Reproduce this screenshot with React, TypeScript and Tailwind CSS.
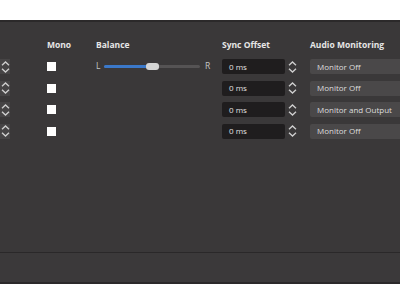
import React from 'react';

type Row = { monitor: string; slider?: boolean };

const rows: Row[] = [
  { monitor: 'Monitor Off', slider: true },
  { monitor: 'Monitor Off' },
  { monitor: 'Monitor and Output' },
  { monitor: 'Monitor Off' },
];

function Spinner({ className = '' }: { className?: string }) {
  return (
    <div className={`flex flex-col items-center justify-center w-[10px] h-[15px] ${className}`}>
      <svg width="9" height="5" viewBox="0 0 9 5">
        <path d="M1 4.3 L4.5 1 L8 4.3" fill="none" stroke="#cfcfcf" strokeWidth="1.3" />
      </svg>
      <svg width="9" height="5" viewBox="0 0 9 5" className="mt-[2px]">
        <path d="M1 0.7 L4.5 4 L8 0.7" fill="none" stroke="#cfcfcf" strokeWidth="1.3" />
      </svg>
    </div>
  );
}

export default function App() {
  return (
    <div
      className="w-[400px] h-[284px] bg-white flex flex-col overflow-hidden text-[#dcdcdc]"
      style={{ fontFamily: '"Open Sans", "Noto Sans", sans-serif' }}
    >
      <div className="h-[20px] bg-white shrink-0" />
      <div className="flex-1 flex flex-col bg-[#3a3839] border-t-2 border-[#2b292a]">
        <div className="h-[230px] pt-[12px]">
          {/* header */}
          <div className="grid grid-cols-[47px_49px_126px_88px_1fr] h-[22px] items-center text-[8.5px] font-bold text-[#e6e6e6]">
            <div />
            <div>Mono</div>
            <div>Balance</div>
            <div>Sync Offset</div>
            <div className="whitespace-nowrap">Audio Monitoring</div>
          </div>
          {rows.map((r, i) => (
            <div key={i} className="grid grid-cols-[47px_49px_126px_88px_1fr] h-[21.5px] items-center text-[8px]">
              <div>
                <Spinner className="bg-[#464445]" />
              </div>
              <div>
                <div className="w-[9px] h-[9px] bg-white" />
              </div>
              <div>
                {r.slider && (
                  <div className="flex items-center text-[#c4c4c4] text-[8.5px]">
                    <span className="w-[8px]">L</span>
                    <div className="relative w-[96px] h-[3px] bg-[#555354] rounded-full">
                      <div className="w-[46px] h-[3px] bg-[#3b78c9] rounded-full" />
                      <div className="absolute left-[42px] top-[-2px] w-[13px] h-[7px] rounded-[3px] bg-[#d4d4d4]" />
                    </div>
                    <span className="ml-[5px]">R</span>
                  </div>
                )}
              </div>
              <div className="flex items-center">
                <div className="w-[63px] h-[15px] bg-[#1f1d1e] rounded-[2px] flex items-center pl-[7px] text-[#e0e0e0]">0 ms</div>
                <Spinner className="ml-[2px]" />
              </div>
              <div className="h-[15px] bg-[#4a4849] rounded-l-[2px] flex items-center pl-[7px] text-[#dedede] whitespace-nowrap">
                {r.monitor}
              </div>
            </div>
          ))}
        </div>
        <div className="flex-1 border-t border-[#2a2829] bg-[#3b393a]" />
        <div className="h-[2px] bg-[#2b292a]" />
      </div>
    </div>
  );
}
